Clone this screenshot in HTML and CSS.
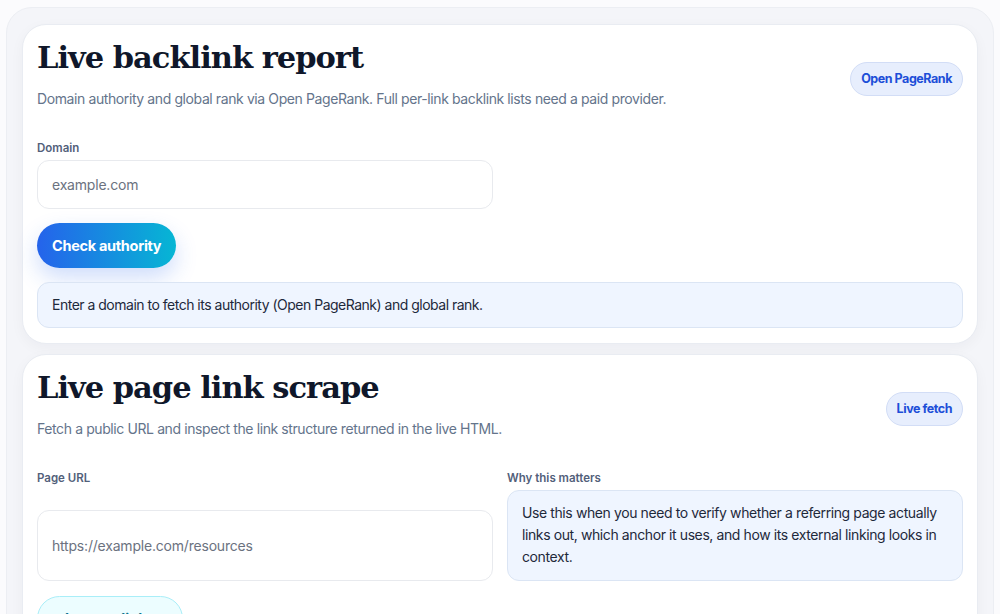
FILE: index.html
```html
<!DOCTYPE html>
<html lang="en">
<head>
<meta charset="utf-8">
<title>Backlinks</title>
<link rel="stylesheet" href="styles.css">
</head>
<body>
<div class="shell">
  <section class="card">
    <header class="card-head">
      <div class="head-text">
        <h2 class="title">Live backlink report</h2>
        <p class="subtitle">Domain authority and global rank via Open PageRank. Full per-link backlink lists need a paid provider.</p>
      </div>
      <span class="badge">Open PageRank</span>
    </header>
    <div class="field half">
      <label class="label">Domain</label>
      <div class="input">example.com</div>
    </div>
    <button class="btn-primary">Check authority</button>
    <div class="info">Enter a domain to fetch its authority (Open PageRank) and global rank.</div>
  </section>

  <section class="card">
    <header class="card-head">
      <div class="head-text">
        <h2 class="title">Live page link scrape</h2>
        <p class="subtitle">Fetch a public URL and inspect the link structure returned in the live HTML.</p>
      </div>
      <span class="badge">Live fetch</span>
    </header>
    <div class="grid">
      <div class="field col-split">
        <label class="label">Page URL</label>
        <div class="input tall">https://example.com/resources</div>
      </div>
      <div class="field">
        <label class="label">Why this matters</label>
        <div class="note">Use this when you need to verify whether a referring page actually links out, which anchor it uses, and how its external linking looks in context.</div>
      </div>
    </div>
    <button class="btn-soft">Inspect links</button>
  </section>
</div>
</body>
</html>
```

FILE: styles.css
```css
* { box-sizing: border-box; }
html, body { margin: 0; padding: 0; }
body {
  background: #fbfbfd;
  font-family: Inter, "Noto Sans", sans-serif;
  color: #0f172a;
  height: 614px;
  overflow: hidden;
}
.shell {
  margin: 7px 6px 0;
  padding: 16px 15px 16px;
  background: #f4f5f9;
  border: 1px solid #eceef3;
  border-radius: 26px;
  display: flex;
  flex-direction: column;
  gap: 10px;
}
.card {
  background: #ffffff;
  border: 1px solid #e9ecf2;
  border-radius: 24px;
  padding: 13px 14px 15px;
  box-shadow: 0 4px 14px rgba(15, 23, 42, 0.04);
  display: flex;
  flex-direction: column;
  align-items: flex-start;
}
.card-head {
  width: 100%;
  display: flex;
  align-items: center;
  justify-content: space-between;
}
.title {
  margin: 0;
  font-family: "DejaVu Serif", serif;
  font-weight: 700;
  font-size: 30.5px;
  line-height: 38px;
  letter-spacing: -1px;
  color: #0f172a;
}
.subtitle {
  margin: 12px 0 0;
  font-size: 14px;
  line-height: 22px;
  color: #64748b;
  letter-spacing: -0.4px;
}
.badge {
  background: #e7eefd;
  border: 1px solid #d2ddf6;
  color: #1d4ed8;
  font-weight: 700;
  font-size: 12.5px;
  line-height: 16px;
  padding: 8px 10px;
  border-radius: 999px;
  letter-spacing: -0.45px;
  margin-top: 10px;
}
.field {
  display: flex;
  flex-direction: column;
}
.half { width: 456px; margin-top: 30px; }
.label {
  font-size: 11.5px;
  font-weight: 600;
  line-height: 16px;
  color: #52607a;
  margin-bottom: 4px;
}
.input {
  height: 49px;
  border: 1px solid #e8eaee;
  border-radius: 12px;
  padding: 0 14px;
  display: flex;
  align-items: center;
  font-size: 14px;
  letter-spacing: -0.2px;
  color: #6b7280;
  background: #fff;
}
.input.tall { height: 71px; }
.btn-primary {
  margin-top: 14px;
  height: 45px;
  padding: 0 15px;
  border: 0;
  border-radius: 999px;
  background: linear-gradient(90deg, #2563eb 0%, #06b6d4 100%);
  color: #fff;
  font-family: Inter, "Noto Sans", sans-serif;
  font-weight: 700;
  font-size: 14.5px;
  letter-spacing: -0.3px;
  box-shadow: 0 10px 22px rgba(37, 99, 235, 0.22);
}
.info {
  margin-top: 14px;
  width: 100%;
  background: #eff5ff;
  border: 1px solid #dbe5f4;
  border-radius: 12px;
  padding: 12px 14px;
  font-size: 14px;
  line-height: 20px;
  color: #1e293b;
  letter-spacing: -0.5px;
}
.grid {
  width: 100%;
  margin-top: 30px;
  display: grid;
  grid-template-columns: 1fr 1fr;
  gap: 14px;
}
.col-split { justify-content: space-between; }
.note {
  background: #eff5ff;
  border: 1px solid #dbe5f4;
  border-radius: 12px;
  padding: 11px 12px 12px 14px;
  font-size: 14px;
  line-height: 22px;
  color: #1e293b;
  letter-spacing: -0.4px;
}
.btn-soft {
  margin-top: 15px;
  height: 45px;
  padding: 0 27px;
  border: 1px solid #a9eef8;
  border-radius: 999px;
  background: #ecfdff;
  color: #0e7490;
  font-family: Inter, "Noto Sans", sans-serif;
  font-weight: 700;
  font-size: 14.5px;
}
```
